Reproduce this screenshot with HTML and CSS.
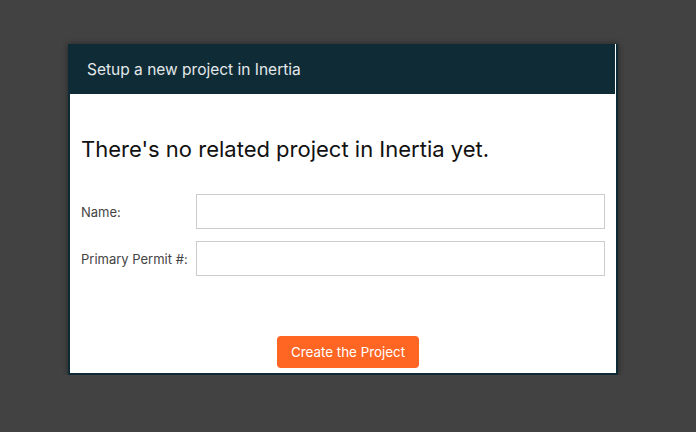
FILE: index.html
```html
<!DOCTYPE html>
<html lang="en">

<head>
    <meta charset="UTF-8">
    <meta name="viewport" content="width=device-width, initial-scale=1.0">
    <title>Setup a new project in Inertia</title>
    <link rel="stylesheet" href="styles.css">
</head>

<body>

    <div class="dialog">
        <div class="dialog-header">Setup a new project in Inertia</div>
        <div class="dialog-body">
            <h2>There's no related project in Inertia yet.</h2>
            <form class="project-form">
                <div class="form-row">
                    <label for="project-name">Name:</label>
                    <input type="text" id="project-name">
                </div>
                <div class="form-row">
                    <label for="permit-number">Primary Permit #:</label>
                    <input type="text" id="permit-number">
                </div>
                <div class="actions">
                    <button type="button" class="btn">Create the Project</button>
                </div>
            </form>
        </div>
    </div>

</body>

</html>
```

FILE: styles.css
```css
body {
    margin: 0;
    background: #424242;
    font-family: Inter, "Noto Sans", sans-serif;
}

.dialog {
    margin: 44px 0 0 68px;
    width: 546px;
    height: 329px;
    background: #fff;
    border: 2px solid #0e2a35;
    border-top: none;
    box-shadow: 0 0 6px rgba(0, 0, 0, 0.45);
    overflow: hidden;
}

.dialog-header {
    height: 50px;
    margin-right: 1px;
    padding-left: 17px;
    display: flex;
    align-items: center;
    background: #0f2b36;
    color: #e3e8ea;
    font-size: 15.5px;
}

.dialog-body {
    padding: 0 11px;
}

h2 {
    margin: 40px 0 30px;
    font-size: 22px;
    font-weight: 400;
    line-height: 30px;
    color: #111;
}

.form-row {
    display: flex;
    align-items: center;
    margin-bottom: 12px;
}

.form-row label {
    width: 115px;
    font-size: 13px;
    color: #444;
}

.form-row input {
    width: 409px;
    height: 35px;
    box-sizing: border-box;
    border: 1px solid #ccc;
    padding: 0 8px;
    font-family: inherit;
}

.actions {
    display: flex;
    justify-content: center;
    padding: 48px 0 0 10px;
}

.btn {
    width: 142px;
    height: 32px;
    background: #ff6624;
    color: #fff;
    border: none;
    border-radius: 4px;
    font-family: inherit;
    font-size: 13.4px;
    cursor: pointer;
}
```
